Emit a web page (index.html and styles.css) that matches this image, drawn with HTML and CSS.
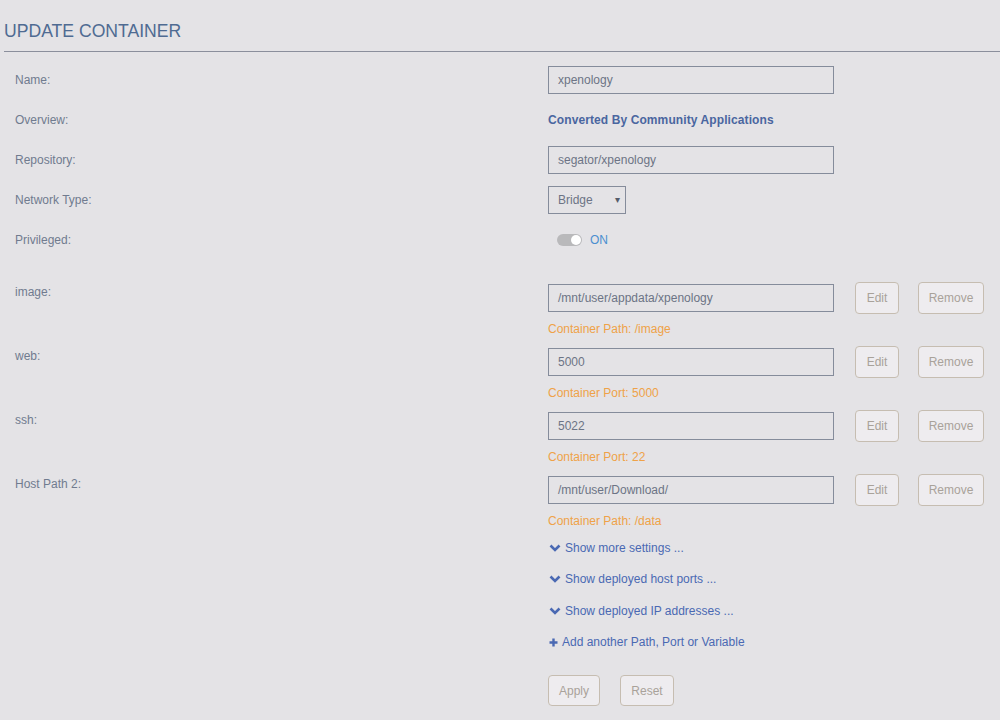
FILE: index.html
```html
<!DOCTYPE html>
<html>
<head>
<meta charset="utf-8">
<link rel="stylesheet" href="styles.css">
</head>
<body>
<div class="page">
  <div class="header">UPDATE CONTAINER</div>

  <div class="row">
    <div class="label">Name:</div>
    <div class="value"><div class="input wide">xpenology</div></div>
  </div>
  <div class="row">
    <div class="label">Overview:</div>
    <div class="value"><span class="overview">Converted By Community Applications</span></div>
  </div>
  <div class="row">
    <div class="label">Repository:</div>
    <div class="value"><div class="input wide">segator/xpenology</div></div>
  </div>
  <div class="row">
    <div class="label">Network Type:</div>
    <div class="value"><div class="input select">Bridge<span class="caret">▾</span></div></div>
  </div>
  <div class="row">
    <div class="label">Privileged:</div>
    <div class="value"><span class="toggle"><span class="knob"></span></span><span class="on">ON</span></div>
  </div>

  <div class="entries">
    <div class="entry">
      <div class="label elabel">image:</div>
      <div class="evalue">
        <div class="eline">
          <div class="input wide">/mnt/user/appdata/xpenology</div>
          <button class="btn edit">Edit</button>
          <button class="btn remove">Remove</button>
        </div>
        <div class="desc">Container Path: /image</div>
      </div>
    </div>
    <div class="entry">
      <div class="label elabel">web:</div>
      <div class="evalue">
        <div class="eline">
          <div class="input wide">5000</div>
          <button class="btn edit">Edit</button>
          <button class="btn remove">Remove</button>
        </div>
        <div class="desc">Container Port: 5000</div>
      </div>
    </div>
    <div class="entry">
      <div class="label elabel">ssh:</div>
      <div class="evalue">
        <div class="eline">
          <div class="input wide">5022</div>
          <button class="btn edit">Edit</button>
          <button class="btn remove">Remove</button>
        </div>
        <div class="desc">Container Port: 22</div>
      </div>
    </div>
    <div class="entry">
      <div class="label elabel">Host Path 2:</div>
      <div class="evalue">
        <div class="eline">
          <div class="input wide">/mnt/user/Download/</div>
          <button class="btn edit">Edit</button>
          <button class="btn remove">Remove</button>
        </div>
        <div class="desc">Container Path: /data</div>
      </div>
    </div>
  </div>

  <div class="links">
    <div class="link"><svg class="chev" width="12" height="8" viewBox="0 0 12 8"><polyline points="1.5,1.5 6,6 10.5,1.5" fill="none" stroke="#4a69b3" stroke-width="2.6" stroke-linejoin="miter"/></svg>Show more settings ...</div>
    <div class="link"><svg class="chev" width="12" height="8" viewBox="0 0 12 8"><polyline points="1.5,1.5 6,6 10.5,1.5" fill="none" stroke="#4a69b3" stroke-width="2.6" stroke-linejoin="miter"/></svg>Show deployed host ports ...</div>
    <div class="link"><svg class="chev" width="12" height="8" viewBox="0 0 12 8"><polyline points="1.5,1.5 6,6 10.5,1.5" fill="none" stroke="#4a69b3" stroke-width="2.6" stroke-linejoin="miter"/></svg>Show deployed IP addresses ...</div>
    <div class="link"><svg class="plus" width="9" height="9" viewBox="0 0 9 9"><path d="M4.5 0.5V8.5M0.5 4.5H8.5" stroke="#4a69b3" stroke-width="2.4"/></svg>Add another Path, Port or Variable</div>
  </div>

  <div class="actions">
    <button class="btn apply">Apply</button>
    <button class="btn reset">Reset</button>
  </div>
</div>
</body>
</html>
```

FILE: styles.css
```css
html, body {
  margin: 0;
  padding: 0;
  background: #e4e3e6;
}
body {
  font-family: "Liberation Sans", Arial, sans-serif;
  font-size: 12px;
  color: #707b8f;
}
.page {
  width: 1000px;
  height: 720px;
  overflow: hidden;
}
.header {
  margin-left: 4px;
  padding-top: 20px;
  padding-bottom: 9px;
  line-height: 22px;
  font-size: 17.6px;
  color: #4f6b92;
  border-bottom: 1px solid #8b8f9c;
  margin-bottom: 8px;
}
.row {
  display: flex;
  align-items: center;
  height: 40px;
}
.label {
  width: 533px;
  padding-left: 15px;
  line-height: 16px;
  color: #707b8f;
  flex: none;
}
.value {
  display: flex;
  align-items: center;
}
.input {
  box-sizing: border-box;
  height: 28px;
  line-height: 26px;
  border: 1px solid #858c9b;
  padding-left: 9px;
  color: #6c7485;
  font-size: 12px;
}
.input.wide {
  width: 286px;
}
.input.select {
  width: 78px;
  position: relative;
}
.caret {
  position: absolute;
  right: 5px;
  top: 0;
  font-size: 10px;
  color: #555c6a;
}
.overview {
  font-weight: bold;
  color: #4a66a0;
  letter-spacing: 0.1px;
}
.toggle {
  display: inline-block;
  width: 25px;
  height: 12px;
  border-radius: 6px;
  background: #b9b9bb;
  margin-left: 9px;
  position: relative;
}
.knob {
  position: absolute;
  right: 1px;
  top: 1px;
  width: 10px;
  height: 10px;
  border-radius: 5px;
  background: #ffffff;
}
.on {
  margin-left: 8px;
  color: #4b8fd0;
}
.entries {
  margin-top: 22px;
  display: flex;
  flex-direction: column;
  gap: 9px;
}
.entry {
  display: flex;
}
.elabel {
  padding-top: 2px;
}
.eline {
  display: flex;
  align-items: center;
  height: 32px;
}
.desc {
  margin-top: 7px;
  line-height: 16px;
  color: #efa248;
}
.btn {
  box-sizing: border-box;
  height: 32px;
  border: 1px solid #c6bdb1;
  border-radius: 4px;
  background: #eeecef;
  color: #a9a29a;
  font-family: "Liberation Sans", Arial, sans-serif;
  font-size: 12px;
  padding: 0;
}
.btn.edit {
  width: 44px;
  margin-left: 21px;
}
.btn.remove {
  width: 66px;
  margin-left: 19px;
}
.links {
  margin-top: 3px;
  padding-left: 548px;
}
.link {
  display: flex;
  align-items: center;
  height: 31.5px;
  color: #4a69b3;
}
.chev {
  margin-left: 1px;
  margin-right: 4px;
}
.plus {
  margin-left: 1px;
  margin-right: 4px;
}
.actions {
  margin-top: 17px;
  padding-left: 548px;
  display: flex;
}
.btn.apply {
  width: 52px;
  height: 31px;
}
.btn.reset {
  width: 54px;
  height: 31px;
  margin-left: 20px;
}
```
